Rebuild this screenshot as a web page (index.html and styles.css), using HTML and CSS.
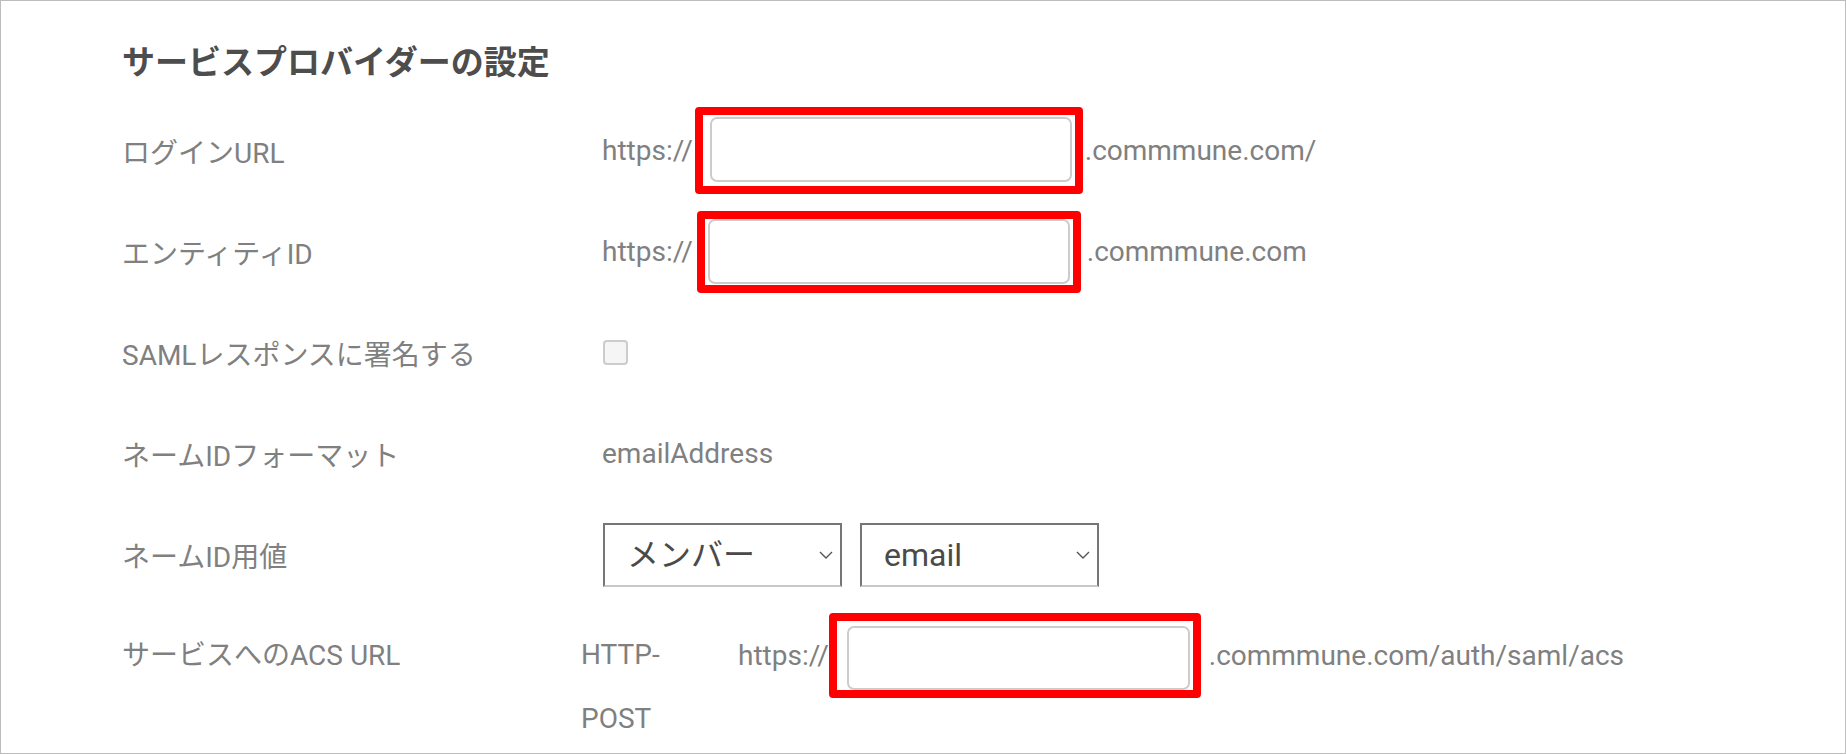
FILE: index.html
```html
<!DOCTYPE html>
<html lang="ja">
<head>
    <meta charset="UTF-8">
    <meta name="viewport" content="width=device-width, initial-scale=1.0">
    <title>サービスプロバイダーの設定</title>
    <link rel="stylesheet" href="styles.css">
</head>
<body>
    <div class="frame">
        <h1 class="title">サービスプロバイダーの設定</h1>

        <div class="row">
            <div class="label">ログインURL</div>
            <div class="value">
                <span>https://</span>
                <span class="mark mark-login"><input class="text-input" type="text"></span>
                <span class="suffix suffix-login">.commmune.com/</span>
            </div>
        </div>

        <div class="row">
            <div class="label">エンティティID</div>
            <div class="value">
                <span>https://</span>
                <span class="mark mark-entity"><input class="text-input" type="text"></span>
                <span class="suffix suffix-entity">.commmune.com</span>
            </div>
        </div>

        <div class="row">
            <div class="label">SAMLレスポンスに署名する</div>
            <div class="value">
                <input class="check" type="checkbox">
            </div>
        </div>

        <div class="row">
            <div class="label">ネームIDフォーマット</div>
            <div class="value">emailAddress</div>
        </div>

        <div class="row">
            <div class="label">ネームID用値</div>
            <div class="value">
                <span class="select-box">
                    <select class="select">
                        <option>メンバー</option>
                    </select>
                    <svg class="chevron" width="14" height="8" viewBox="0 0 14 8"><path d="M1 1l6 6 6-6" fill="none" stroke="#555" stroke-width="1.4"/></svg>
                </span>
                <span class="select-box">
                    <select class="select">
                        <option>email</option>
                    </select>
                    <svg class="chevron" width="14" height="8" viewBox="0 0 14 8"><path d="M1 1l6 6 6-6" fill="none" stroke="#555" stroke-width="1.4"/></svg>
                </span>
            </div>
        </div>

        <div class="row row-acs">
            <div class="label label-acs">サービスへのACS URL</div>
            <div class="binding">HTTP-POST</div>
            <div class="value value-acs">
                <span>https://</span>
                <span class="mark mark-acs"><input class="text-input text-input-acs" type="text"></span>
                <span class="suffix suffix-acs">.commmune.com/auth/saml/acs</span>
            </div>
        </div>
    </div>
</body>
</html>
```

FILE: styles.css
```css
body {
    margin: 0;
    background-color: #fff;
    font-family: Roboto, "Noto Sans CJK JP", sans-serif;
}
.frame {
    height: 754px;
    box-sizing: border-box;
    border: 1px solid #bdbdbd;
    padding-left: 121px;
    overflow: hidden;
    background-color: #fff;
}
.title {
    margin: 0;
    height: 99px;
    box-sizing: border-box;
    padding-top: 24px;
    line-height: 75px;
    font-size: 33px;
    font-weight: bold;
    color: #4d4d4d;
}
.row {
    display: flex;
    align-items: center;
    height: 101px;
}
.label {
    width: 480px;
    flex-shrink: 0;
    font-size: 28px;
    color: #808080;
}
.value {
    display: flex;
    align-items: center;
    font-size: 28px;
    color: #808080;
    white-space: nowrap;
}
.mark {
    display: flex;
    border: 8px solid #ff0000;
    border-radius: 4px;
}
.mark-login {
    margin-left: 2px;
    padding: 2px 3px 4px 7px;
}
.mark-entity {
    margin-left: 4px;
    padding: 0 3px 1px 3px;
}
.mark-acs {
    padding: 5px 3px 0 10px;
}
.text-input {
    width: 362px;
    height: 65px;
    box-sizing: border-box;
    margin: 0;
    border: 2px solid #cccccc;
    border-radius: 7px;
    background-color: #fff;
    outline: none;
}
.text-input-acs {
    width: 343px;
    height: 64px;
}
.suffix-login {
    margin-left: 2px;
}
.suffix-entity {
    margin-left: 6px;
}
.suffix-acs {
    margin-left: 8px;
}
.check {
    appearance: none;
    -webkit-appearance: none;
    width: 25px;
    height: 25px;
    margin: 0 0 0 1px;
    border: 2px solid #cccccc;
    border-radius: 4px;
    background-color: #f5f5f5;
}
.select-box {
    position: relative;
    display: flex;
    margin-right: 17px;
}
.select {
    appearance: none;
    -webkit-appearance: none;
    width: 239px;
    height: 64px;
    margin: 0 0 0 1px;
    padding: 0 0 0 22px;
    border: 2px solid #767676;
    border-bottom-color: #c8c8c8;
    border-radius: 0;
    background-color: #fff;
    font-family: Roboto, "Noto Sans CJK JP", sans-serif;
    font-size: 32px;
    color: #4a4a4a;
}
.chevron {
    position: absolute;
    right: 9px;
    top: 28px;
}
.row-acs {
    align-items: flex-start;
}
.label-acs {
    width: 459px;
    line-height: 101px;
}
.binding {
    width: 110px;
    margin-top: 18px;
    margin-right: 47px;
    flex-shrink: 0;
    font-size: 28px;
    line-height: 64px;
    color: #808080;
}
.value-acs {
    height: 101px;
}
```
